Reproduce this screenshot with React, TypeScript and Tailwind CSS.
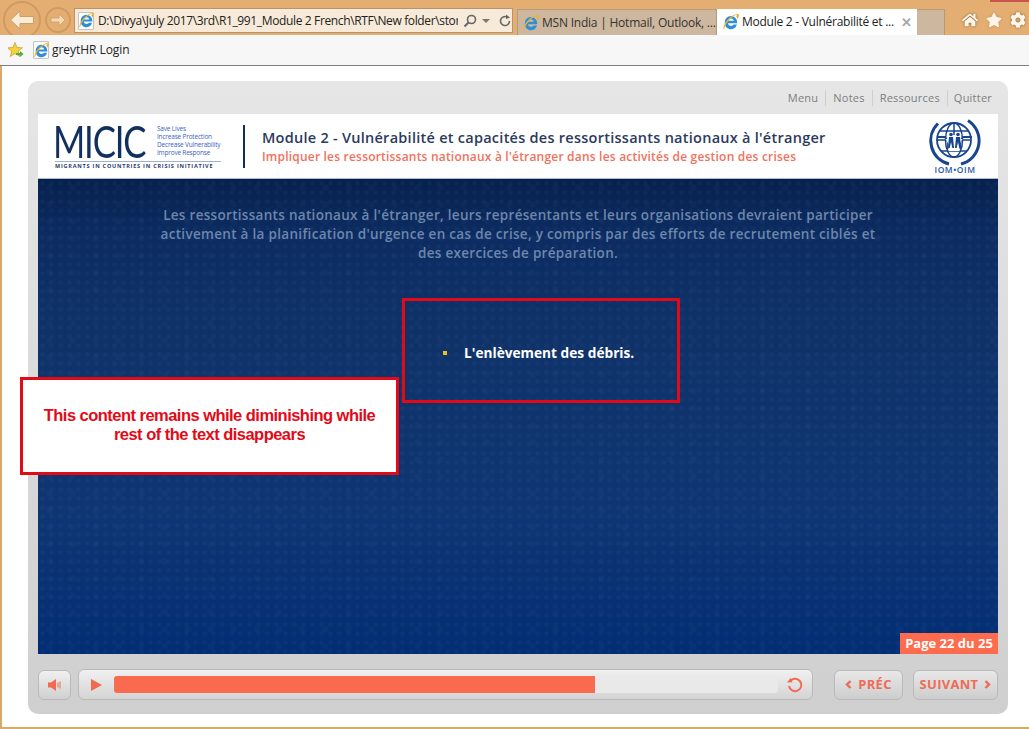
import React from "react";
import { FaHome, FaStar, FaCog } from "react-icons/fa";

function IE({ size = 16 }: { size?: number }) {
  return (
    <svg width={size} height={size} viewBox="1 1 14 14" className="shrink-0">
      <path d="M2.6 8.2a5.4 5.4 0 0 1 10.8-.2v1H5.4c.2 1.5 1.3 2.3 2.7 2.3 1 0 1.8-.4 2.3-1.1h2.8a5.4 5.4 0 0 1-10.6-2zM5.5 7h5c-.2-1.2-1.2-2-2.5-2S5.700 5.800 5.500 7z" fill="#2f8fd6" />
      <path d="M1.500 14.500C.7 12.500 3.500 6.500 8 3.500c3-2 6-3 6.800-2 .6.800-.1 2.500-1 4-.3-1-.9-2-1.500-2.500 1-.7 1-1.100.5-1.100C10 2 3.500 8.500 2.400 13c-.2.700-.5 1.500-.9 1.500z" fill="#eeb233" />
    </svg>
  );
}

function IEPage() {
  return (
    <span className="w-[16px] h-[18px] shrink-0 flex items-center justify-center bg-[#fdfdfd] border border-[#c4c4c4] rounded-[1px]">
      <IE size={15} />
    </span>
  );
}

function IOM() {
  return (
    <svg width="56" height="58" viewBox="0 0 56 58" className="shrink-0">
      <g fill="none" stroke="#17458f">
        <path d="M10 6.500A24 24 0 0 0 21 47" strokeWidth="3" />
        <path d="M40 3.500A24 24 0 0 1 33 47" strokeWidth="3" />
        <circle cx="26" cy="23" r="17" strokeWidth="1.800" />
        <ellipse cx="26" cy="23" rx="8.500" ry="17" strokeWidth="1.500" />
        <path d="M12 14h28M9 23h9M34 23h9M26 6v12M13 34h26" strokeWidth="1.500" />
        <path d="M9 20h8l3 5v6h12v-6l3-5h9" strokeWidth="1.800" />
      </g>
      <path d="M17.500 22h17l-3 5v7H20.500v-7z" fill="#fff" />
      <g fill="#17458f">
        <circle cx="23" cy="17.500" r="1.800" />
        <circle cx="30" cy="17.500" r="1.800" />
        <path d="M21 20h4l1 11h-1.700l-1.300-6-1.300 6H20zM28 20h4l1 11h-1.700l-1.300-6-1.300 6H27z" />
      </g>
      <text x="27" y="56" textAnchor="middle" fontSize="8.500" fontWeight="600" fill="#2a5aa0" letterSpacing="0.5" fontFamily="'Open Sans', sans-serif">IOM•OIM</text>
    </svg>
  );
}

const dots =
  "bg-[radial-gradient(circle,rgba(140,180,255,0.04)_1.5px,transparent_3px),radial-gradient(circle,rgba(140,180,255,0.03)_2px,transparent_4px),linear-gradient(180deg,#07214d_0%,#0c2c62_12%,#0f3369_35%,#0f3673_70%,#032e74_100%)] bg-[length:9px_9px,23px_17px,100%_100%]";

export default function App() {
  return (
    <div className="w-[1029px] h-[729px] overflow-hidden relative bg-white font-['Open_Sans',sans-serif] flex flex-col">
      {/* Browser chrome */}
      <div className="h-[35px] shrink-0 bg-[#e4ae72] flex items-start overflow-hidden">
        <div className="ml-[3px] mt-[1px] w-[38px] h-[38px] shrink-0 rounded-full border-2 border-[#d09a60] flex items-center justify-center">
          <svg width="26" height="20" viewBox="0 0 26 20">
            <path d="M11 1L1.500 10 11 19V13.500h13.500v-7H11z" fill="#f9ecd9" stroke="#cf9d63" strokeWidth="1" />
          </svg>
        </div>
        <div className="ml-[4px] mt-[7px] w-[26px] h-[26px] shrink-0 rounded-full border-2 border-[#d09a60] flex items-center justify-center">
          <svg width="16" height="14" viewBox="0 0 16 14">
            <path d="M9 1l6 6-6 6V9H1V5h8z" fill="#f3d9b6" stroke="#cf9d63" strokeWidth=".8" />
          </svg>
        </div>
        <div className="ml-[3px] mt-[8px] w-[439px] h-[25px] shrink-0 bg-[#f8ead9] border border-[#b5946c] flex items-center pl-[3px]">
          <IEPage />
          <span className="ml-[4px] w-[360px] overflow-hidden whitespace-nowrap text-[12px] leading-[16px] text-[#222] tracking-[-0.36px]">
            D:\Divya\July 2017\3rd\R1_991_Module 2 French\RTF\New folder\story
          </span>
          <svg width="14" height="14" viewBox="0 0 14 14" className="ml-[5px]">
            <circle cx="8.500" cy="5.500" r="4" fill="none" stroke="#666" strokeWidth="1.600" />
            <path d="M5.500 8.500L1.500 12.500" stroke="#666" strokeWidth="2" />
          </svg>
          <span className="ml-[5px] w-0 h-0 border-x-[4px] border-x-transparent border-t-[4px] border-t-[#777]" />
          <svg width="14" height="14" viewBox="0 0 14 14" className="ml-[8px]">
            <path d="M11.500 7A4.500 4.500 0 1 1 9.500 3.300" fill="none" stroke="#666" strokeWidth="1.600" />
            <path d="M8 .5l4 3-4 1.500z" fill="#666" />
          </svg>
        </div>
        <div className="ml-[4px] mt-[9px] h-[26px] w-[200px] shrink-0 bg-[#cdb79e] border border-[#b39a7c] border-b-0 flex items-center pl-[5px] gap-[3px]">
          <IE />
          <span className="text-[12px] text-[#333] whitespace-nowrap tracking-[-0.22px]">MSN India | Hotmail, Outlook, ...</span>
        </div>
        <div className="mt-[9px] h-[26px] w-[200px] shrink-0 bg-white flex items-center pl-[6px] gap-[3px]">
          <IE />
          <span className="text-[12px] text-[#222] whitespace-nowrap tracking-[-0.26px]">Module 2 - Vulnérabilité et ...</span>
          <span className="ml-[4px] text-[#a9a9a9] text-[13px] font-bold leading-none">✕</span>
        </div>
        <div className="mt-[9px] h-[26px] w-[28px] shrink-0 bg-[#cdb79e] border border-l-0 border-b-0 border-[#b39a7c]" />
        <div className="ml-[17px] mt-[12px] flex items-center gap-[8px] text-[#fdf5ea]">
          <FaHome size={16} className="drop-shadow-[0_0_1px_#7a5a30]" />
          <FaStar size={16} className="drop-shadow-[0_0_1px_#b98a50]" />
          <FaCog size={16} className="drop-shadow-[0_0_1px_#7a5a30]" />
        </div>
      </div>
      <div className="h-[31px] shrink-0 bg-[#f7f7f7] border-b border-[#7e7e7e] flex items-center pl-[8px]">
        <svg width="16" height="16" viewBox="0 0 16 16">
          <path d="M7 .5l2 5 5.500.3-4.300 3.400 1.500 5.300L7 11.500 2.300 14.500l1.500-5.300L-.5 5.800 5 5.500z" fill="#f5d33f" stroke="#c59a1e" strokeWidth=".7" />
          <path d="M8 11h4V9l3.500 3-3.500 3v-2H8z" fill="#4fae3a" />
        </svg>
        <span className="ml-[9px]"><IEPage /></span>
        <span className="ml-[3px] text-[12px] text-[#222] tracking-[-0.05px]">greytHR Login</span>
      </div>

      {/* Page */}
      <div className="flex-1 bg-white border-l-2 border-b-2 border-[#dba868] pl-[26px] pt-[15px]">
        <div className="w-[980px] h-[633px] rounded-[10px] bg-[linear-gradient(180deg,#e6e6e6_0%,#cfcfcf_100%)] px-[10px] flex flex-col">
          <div className="h-[33px] shrink-0 flex items-center justify-end pr-[6px] text-[11px] text-[#7d7d7d] tracking-[0.22px] pt-[1px]">
            <span className="pr-[7px]">Menu</span>
            <span className="border-l border-[#cfcfcf] px-[7px]">Notes</span>
            <span className="border-l border-[#cfcfcf] px-[7px]">Ressources</span>
            <span className="border-l border-[#cfcfcf] pl-[6px]">Quitter</span>
          </div>

          <div className="h-[64px] shrink-0 bg-white flex items-center pl-[17px] pr-[14px]">
            <div className="w-[166px] flex flex-col">
              <div className="flex items-center h-[36px]">
                <span className="w-[120px] -mr-[25px] -ml-[2px] origin-left scale-x-[0.79] font-['Lato',sans-serif] font-normal text-[44px] leading-[36px] tracking-[-1.500px] text-[#12305f] whitespace-nowrap">MICIC</span>
                <div className="ml-[9px] flex flex-col text-[6.500px] leading-[8px] text-[#3b63c4] tracking-[-0.2px] whitespace-nowrap">
                  <span>Save Lives</span>
                  <span>Increase Protection</span>
                  <span>Decrease Vulnerability</span>
                  <span>Improve Response</span>
                </div>
              </div>
              <div className="mt-[2px] border-t border-[#9fb2d4] pt-[1px] text-[5.500px] leading-[7px] font-bold text-[#26406e] tracking-[0.78px] whitespace-nowrap">
                MIGRANTS IN COUNTRIES IN CRISIS INITIATIVE
              </div>
            </div>
            <div className="ml-[22px] w-[2px] h-[43px] bg-[#12305f]" />
            <div className="ml-[17px] flex-1 flex flex-col">
              <span className="text-[14.500px] leading-[20px] font-semibold text-[#2c3a5c] tracking-[0.26px] whitespace-nowrap">
                Module 2 - Vulnérabilité et capacités des ressortissants nationaux à l'étranger
              </span>
              <span className="text-[12px] leading-[17px] font-semibold text-[#f2705c] tracking-[0.2px] whitespace-nowrap">
                Impliquer les ressortissants nationaux à l'étranger dans les activités de gestion des crises
              </span>
            </div>
            <IOM />
          </div>

          <div className={`relative h-[476px] shrink-0 ${dots} border-t border-[#a9bbd2] flex flex-col items-center`}>
            <p className="mt-[27px] text-center text-[13.500px] leading-[19px] font-semibold text-[#6e87ab] tracking-[0.3px] whitespace-nowrap">
              Les ressortissants nationaux à l'étranger, leurs représentants et leurs organisations devraient participer<br />
              activement à la planification d'urgence en cas de crise, y compris par des efforts de recrutement ciblés et<br />
              des exercices de préparation.
            </p>
            <div className="mt-[80px] ml-[42px] w-[192px] flex items-center text-white text-[13.700px] leading-[20px] font-bold whitespace-nowrap">
              <span className="w-[4px] h-[4px] bg-[#f2c01e] mr-[17px]" />
              L'enlèvement des débris.
            </div>
            <div className="absolute right-0 bottom-0 w-[98px] h-[21px] bg-[#ff6b4d] text-white text-[13px] font-bold leading-[21px] text-center whitespace-nowrap">
              Page 22 du 25
            </div>
          </div>

          <div className="flex-1 flex items-center pt-[1px]">
            <button className="w-[33px] h-[30px] rounded-[6px] border border-[#b9b9b9] bg-[linear-gradient(180deg,#f0f0f0,#d0d0d0)] flex items-center justify-center">
              <svg width="14" height="14" viewBox="0 0 14 14">
                <path d="M0 4.500h3L8 1v12L3 9.500H0z" fill="#f26a50" />
                <path d="M10 4.500v5M12 3.500v7" stroke="#f26a50" strokeWidth="1" />
              </svg>
            </button>
            <div className="ml-[7px] w-[735px] h-[31px] rounded-[6px] border border-[#b9b9b9] bg-[linear-gradient(180deg,#f0f0f0,#d4d4d4)] flex items-center">
              <span className="ml-[12px] w-0 h-0 border-y-[6px] border-y-transparent border-l-[11px] border-l-[#f26a50]" />
              <div className="ml-[12px] w-[664px] h-[17px] rounded-[3px] bg-[#e9e9e9] overflow-hidden">
                <div className="w-[481px] h-full bg-[#f96a4e]" />
              </div>
              <svg width="18" height="18" viewBox="0 0 18 18" className="ml-[8px]">
                <path d="M4 5.500A6.200 6.200 0 1 1 3 10" fill="none" stroke="#f26a50" strokeWidth="2" />
                <path d="M1 6.500l5.500-.2L4.500 2z" fill="#f26a50" />
              </svg>
            </div>
            <button className="ml-[21px] w-[69px] h-[30px] rounded-[6px] border border-[#b9b9b9] bg-[linear-gradient(180deg,#e8e8e8,#cdcdcd)] flex items-center justify-center gap-[6px] text-[13px] font-bold text-[#ee6c56] tracking-[0.3px]">
              <svg width="7" height="9" viewBox="0 0 7 9"><path d="M5.500 1L2 4.500 5.500 8" fill="none" stroke="#ee6c56" strokeWidth="2.400" /></svg>
              PRÉC
            </button>
            <button className="ml-[10px] w-[85px] h-[30px] rounded-[6px] border border-[#b9b9b9] bg-[linear-gradient(180deg,#e8e8e8,#cdcdcd)] flex items-center justify-center gap-[6px] text-[13px] font-bold text-[#ee6c56] tracking-[0.3px]">
              SUIVANT
              <svg width="7" height="9" viewBox="0 0 7 9"><path d="M1.500 1L5 4.500 1.500 8" fill="none" stroke="#ee6c56" strokeWidth="2.400" /></svg>
            </button>
          </div>
        </div>
      </div>

      {/* Overlays */}
      <div className="absolute right-0 top-0 w-[39px] h-[2px] bg-[#c9544c]" />
      <div className="absolute left-[402px] top-[298px] w-[278px] h-[105px] border-[3px] border-[#e30a17]" />
      <div className="absolute left-[20px] top-[377px] w-[379px] h-[98px] border-[3px] border-[#e30a17] bg-white flex items-center justify-center pb-[3px]">
        <p className="text-center font-['Liberation_Sans',sans-serif] font-bold text-[16.500px] leading-[19px] tracking-[-0.53px] text-[#e30a17] whitespace-nowrap">
          This content remains while diminishing while<br />rest of the text disappears
        </p>
      </div>
    </div>
  );
}
